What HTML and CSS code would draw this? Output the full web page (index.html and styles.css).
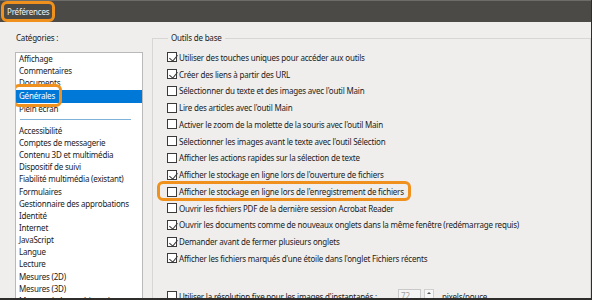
FILE: index.html
```html
<!DOCTYPE html>
<html lang="fr">
    <head>
        <meta charset="UTF-8" />
        <title>Préférences</title>
        <link rel="stylesheet" href="styles.css">
    </head>
    <body>
        <div class="dialog">
            <div class="titlebar">
                <span class="title mark">Préférences</span>
            </div>
            <div class="content">
                <div class="categories">
                    <span class="label">Catégories :</span>
                    <ul class="list">
                        <li>Affichage</li>
                        <li>Commentaires</li>
                        <li>Documents</li>
                        <li class="selected"><span class="mark">Générales</span></li>
                        <li>Plein écran</li>
                        <li class="separator"></li>
                        <li>Accessibilité</li>
                        <li>Comptes de messagerie</li>
                        <li>Contenu 3D et multimédia</li>
                        <li>Dispositif de suivi</li>
                        <li>Fiabilité multimédia (existant)</li>
                        <li>Formulaires</li>
                        <li>Gestionnaire des approbations</li>
                        <li>Identité</li>
                        <li>Internet</li>
                        <li>JavaScript</li>
                        <li>Langue</li>
                        <li>Lecture</li>
                        <li>Mesures (2D)</li>
                        <li>Mesures (3D)</li>
                        <li>Mesures (géographiques)</li>
                    </ul>
                </div>

                <fieldset class="group">
                    <legend>Outils de base</legend>
                    <div class="row"><span class="check on"></span>Utiliser des touches uniques pour accéder aux outils</div>
                    <div class="row"><span class="check on"></span>Créer des liens à partir des URL</div>
                    <div class="row"><span class="check"></span>Sélectionner du texte et des images avec l'outil Main</div>
                    <div class="row"><span class="check"></span>Lire des articles avec l'outil Main</div>
                    <div class="row"><span class="check"></span>Activer le zoom de la molette de la souris avec l'outil Main</div>
                    <div class="row"><span class="check"></span>Sélectionner les images avant le texte avec l'outil Sélection</div>
                    <div class="row"><span class="check"></span>Afficher les actions rapides sur la sélection de texte</div>
                    <div class="row"><span class="check on"></span>Afficher le stockage en ligne lors de l'ouverture de fichiers</div>
                    <div class="row"><span class="mark row-mark"><span class="check"></span>Afficher le stockage en ligne lors de l'enregistrement de fichiers</span></div>
                    <div class="row"><span class="check"></span>Ouvrir les fichiers PDF de la dernière session Acrobat Reader</div>
                    <div class="row"><span class="check on"></span>Ouvrir les documents comme de nouveaux onglets dans la même fenêtre (redémarrage requis)</div>
                    <div class="row"><span class="check on"></span>Demander avant de fermer plusieurs onglets</div>
                    <div class="row"><span class="check on"></span>Afficher les fichiers marqués d'une étoile dans l'onglet Fichiers récents</div>
                    <div class="row last">
                        <span class="check"></span>
                        <span class="res-label">Utiliser la résolution fixe pour les images d'instantanés :</span>
                        <span class="number">72</span>
                        <span class="spin"></span>
                        <span class="unit">pixels/pouce</span>
                    </div>
                </fieldset>
            </div>
        </div>
    </body>
</html>
```

FILE: styles.css
```css
* {
    box-sizing: border-box;
}

body {
    margin: 0px;
    padding: 0px;
    background-color: #2e2d2b;
    font-family: "Noto Sans", sans-serif;
    font-size: 8px;
    letter-spacing: -0.2px;
    color: #1b1b1b;
}

.dialog {
    width: 591px;
    height: 298px;
    overflow: hidden;
    background-color: #efeeed;
}

.titlebar {
    height: 22px;
    background-color: #4b4a46;
    border-top: 1px solid #6d6c69;
    display: flex;
    align-items: center;
    padding-left: 4px;
}

.title {
    color: #f2f2f2;
    font-size: 8px;
    line-height: 11px;
    padding: 2px 3px;
}

/* orange highlight frames */
.mark {
    outline: 3px solid #f0911d;
    outline-offset: 0px;
    border-radius: 3px;
}

.content {
    display: flex;
    padding: 9px 0px 0px 15px;
    gap: 9px;
}

.categories {
    width: 128px;
    flex: none;
    display: flex;
    flex-direction: column;
}

.label {
    height: 14px;
    line-height: 14px;
    padding-left: 1px;
    margin-bottom: 7px;
}

.list {
    margin: 0px;
    padding: 0px;
    list-style: none;
    background-color: #ffffff;
    border: 1px solid #b9b9b9;
    height: 262px;
    overflow: hidden;
}

.list li {
    height: 12.15px;
    line-height: 12.15px;
    padding-left: 3px;
    white-space: nowrap;
}

.list li.selected {
    background-color: #0078d7;
    color: #ffffff;
    margin-top: 1px;
}

.list li.selected .mark {
    padding: 3px 4px 3px 3px;
    margin-left: -3px;
}

.list li.separator {
    height: 11.2px;
    display: flex;
    align-items: center;
    margin-top: -1px;
}

.list li.separator::after {
    content: "";
    display: block;
    margin-left: 1px;
    width: 111px;
    height: 1px;
    background-color: #7fb1d9;
}

.group {
    flex: 1;
    margin: 0px;
    border: 1px solid #d7d6d5;
    padding: 4px 0px 0px 14px;
    min-width: 0px;
}

.group legend {
    padding: 0px 3px;
    margin-left: 1px;
    height: 14px;
    line-height: 14px;
}

.row {
    height: 16.75px;
    display: flex;
    align-items: center;
    white-space: nowrap;
}

.row-mark {
    display: flex;
    align-items: center;
    padding: 2px 4px 1px 7px;
    margin-left: -7px;
}

.check {
    width: 10px;
    height: 10px;
    border: 1px solid #3a3a3a;
    background-color: #ffffff;
    margin-right: 2px;
    flex: none;
    position: relative;
}

.check.on::after {
    content: "";
    position: absolute;
    left: 2.5px;
    top: 0px;
    width: 4px;
    height: 7px;
    border: solid #3a3a3a;
    border-width: 0px 1px 1px 0px;
    transform: rotate(40deg);
}

.row.last {
    margin-top: 21px;
}

.res-label {
    width: 219px;
    flex: none;
}

.number {
    width: 23px;
    height: 14px;
    border: 1px solid #c9c9c9;
    color: #a0a0a0;
    padding-left: 2px;
    line-height: 12px;
    background-color: #f4f4f4;
    flex: none;
}

.spin {
    width: 10px;
    height: 10px;
    margin-left: 3px;
    border: 1px solid #d0d0d0;
    background-color: #f7f7f7;
    position: relative;
    margin-top: -4px;
    flex: none;
}

.spin::after {
    content: "";
    position: absolute;
    left: 2px;
    top: 2px;
    border-left: 2px solid transparent;
    border-right: 2px solid transparent;
    border-bottom: 2px solid #555555;
}

.unit {
    margin-left: 8px;
}
```
